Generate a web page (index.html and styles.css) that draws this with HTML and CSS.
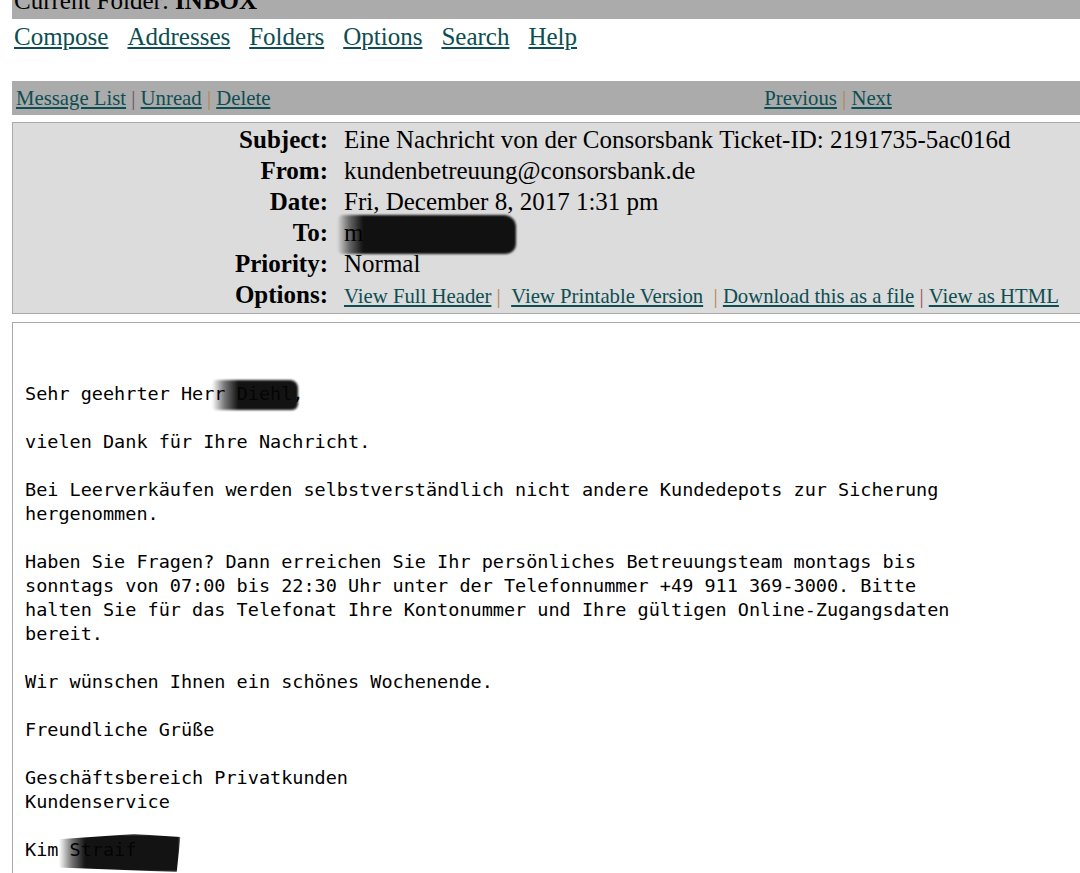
FILE: index.html
```html
<!DOCTYPE html>
<html lang="de">

<head>
    <meta charset="UTF-8">
    <title>SquirrelMail - Read Message</title>
    <link rel="stylesheet" href="styles.css">
</head>

<body>
    <div class="page">
        <div class="folder-bar">
            <span class="folder-label">Current Folder: <b>INBOX</b></span>
        </div>

        <nav class="main-nav">
            <a href="#">Compose</a>
            <a href="#">Addresses</a>
            <a href="#">Folders</a>
            <a href="#">Options</a>
            <a href="#">Search</a>
            <a href="#">Help</a>
        </nav>

        <div class="msg-bar">
            <div class="msg-bar-left">
                <a href="#">Message List</a>&nbsp;<span class="sep sep-dark">|</span>&nbsp;<a href="#">Unread</a>&nbsp;<span class="sep">|</span>&nbsp;<a href="#">Delete</a>
            </div>
            <div class="msg-bar-right">
                <a href="#">Previous</a>&nbsp;<span class="sep">|</span>&nbsp;<a href="#">Next</a>
            </div>
        </div>

        <div class="headers">
            <div class="hdr-row">
                <div class="hdr-label">Subject:</div>
                <div class="hdr-value">Eine Nachricht von der Consorsbank Ticket-ID: 2191735-5ac016d</div>
            </div>
            <div class="hdr-row">
                <div class="hdr-label">From:</div>
                <div class="hdr-value">kundenbetreuung@consorsbank.de</div>
            </div>
            <div class="hdr-row">
                <div class="hdr-label">Date:</div>
                <div class="hdr-value">Fri, December 8, 2017 1:31 pm</div>
            </div>
            <div class="hdr-row">
                <div class="hdr-label">To:</div>
                <div class="hdr-value"><span class="redacted redacted-to">m<span class="hidden-part"></span></span></div>
            </div>
            <div class="hdr-row">
                <div class="hdr-label">Priority:</div>
                <div class="hdr-value">Normal</div>
            </div>
            <div class="hdr-row">
                <div class="hdr-label">Options:</div>
                <div class="hdr-value hdr-options">
                    <a href="#">View Full Header</a>&nbsp;<span class="sep">|</span>&nbsp;&nbsp;<a href="#">View Printable Version</a>&nbsp;&nbsp;<span class="sep">|</span>&nbsp;<a href="#">Download this as a file</a>&nbsp;<span class="sep sep-red">|</span>&nbsp;<a href="#">View as HTML</a>
                </div>
            </div>
        </div>

        <div class="message">
<pre>


Sehr geehrter Herr <span class="redacted redacted-name">Diehl,</span>

vielen Dank für Ihre Nachricht.

Bei Leerverkäufen werden selbstverständlich nicht andere Kundedepots zur Sicherung
hergenommen.

Haben Sie Fragen? Dann erreichen Sie Ihr persönliches Betreuungsteam montags bis
sonntags von 07:00 bis 22:30 Uhr unter der Telefonnummer +49 911 369-3000. Bitte
halten Sie für das Telefonat Ihre Kontonummer und Ihre gültigen Online-Zugangsdaten
bereit.

Wir wünschen Ihnen ein schönes Wochenende.

Freundliche Grüße

Geschäftsbereich Privatkunden
Kundenservice

Kim <span class="redacted redacted-sign">Straif</span>
</pre>
        </div>
    </div>
</body>

</html>
```

FILE: styles.css
```css
html,
body {
    overflow: hidden;
}

body {
    margin: 0;
    font-family: "Liberation Serif", "Times New Roman", serif;
    font-size: 25px;
    color: #000000;
    background: #ffffff;
}

a {
    color: #0c4e52;
    text-decoration: underline;
}

.page {
    width: 1088px;
    padding-left: 12px;
}

.folder-bar {
    background: #ababab;
    height: 19px;
    overflow: hidden;
}

.folder-label {
    display: block;
    margin-top: -14px;
    padding-left: 2px;
    line-height: 29px;
}

.main-nav {
    display: flex;
    gap: 19px;
    margin: 3px 0 30px;
    padding-left: 2px;
    line-height: 29px;
}

.msg-bar {
    display: grid;
    grid-template-columns: 1fr 1fr;
    background: #ababab;
    height: 34px;
    line-height: 34px;
    font-size: 20.75px;
}

.msg-bar-left {
    padding-left: 4px;
}

.msg-bar-right {
    text-align: center;
}

.sep {
    color: #b3864a;
}

.sep-dark {
    color: #6b4f6e;
}

.sep-red {
    color: #9a4a5a;
}

.headers {
    margin-top: 7px;
    background: #dcdcdc;
    border: 1px solid #a9a9a9;
    padding-bottom: 3px;
}

.hdr-row {
    display: grid;
    grid-template-columns: 315px 1fr;
    column-gap: 16px;
    align-items: baseline;
    height: 31px;
    line-height: 31px;
}

.hdr-row:first-child {
    padding-top: 1px;
}

.hdr-label {
    text-align: right;
    font-weight: bold;
}

.hdr-options {
    font-size: 20.75px;
}

.message {
    margin-top: 8px;
    border: 1px solid #a9a9a9;
    padding: 11px 12px;
    min-height: 600px;
}

.message pre {
    margin: 0;
    font-family: "DejaVu Sans Mono", "Liberation Mono", monospace;
    font-size: 18.5px;
    line-height: 24px;
}

/* black marker scribbles over personal data */
.redacted {
    position: relative;
}

.redacted::after {
    content: "";
    position: absolute;
    background: linear-gradient(to right, rgba(0, 0, 0, 0) 0, rgba(0, 0, 0, 0.55) 12px, #050505 26px);
    filter: blur(1px);
    opacity: 0.94;
}

.redacted-name::after {
    left: -25px;
    right: 5px;
    top: -3px;
    bottom: -6px;
    border-radius: 4px 8px 6px 4px;
}

.redacted-to .hidden-part {
    display: inline-block;
    width: 153px;
}

.redacted-to::after {
    left: -7px;
    right: 0;
    top: -4px;
    bottom: -8px;
    border-radius: 6px 12px 10px 6px;
}

.redacted-sign::after {
    left: -11px;
    right: -44px;
    top: -5px;
    bottom: -12px;
    clip-path: polygon(0 14%, 62% 0, 100% 8%, 97% 100%, 0 88%);
}
```
